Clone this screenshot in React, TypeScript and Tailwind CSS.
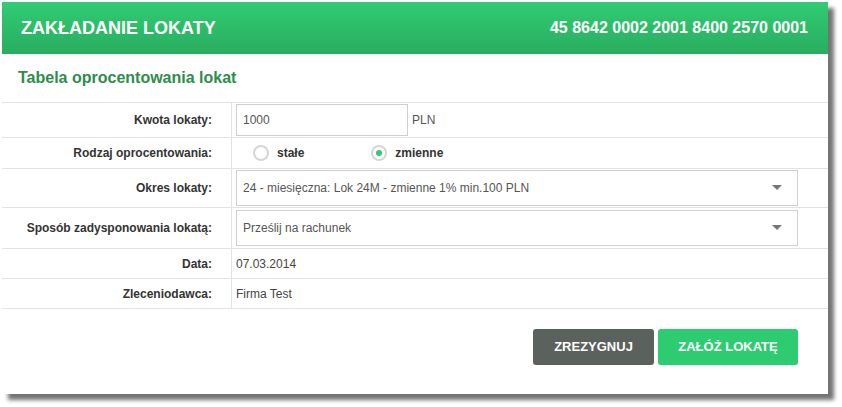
import React from "react";

const font = { fontFamily: '"Liberation Sans", Arial, sans-serif' };

function Row({ label, h, children }: { label: string; h: string; children: React.ReactNode }) {
  return (
    <div className={`flex border-b border-[#e2e2e2] ${h}`}>
      <div className="w-[229px] flex items-center justify-end pr-[19px] text-[12px] font-bold text-[#333]">{label}</div>
      <div className="flex-1 border-l border-[#e2e2e2] flex items-center pl-[4px] text-[12px] text-[#444]">{children}</div>
    </div>
  );
}

function Radio({ checked }: { checked?: boolean }) {
  return (
    <span className="w-[16px] h-[16px] rounded-full border-[2px] border-[#d6d6d6] bg-white flex items-center justify-center">
      {checked && <span className="w-[6px] h-[6px] rounded-full bg-[#2ecc71]" />}
    </span>
  );
}

function Select({ text }: { text: string }) {
  return (
    <div className="w-[562px] h-[36px] border border-[#cfcfcf] flex items-center justify-between pl-[6px] pr-[15px] text-[12px] text-[#555]">
      <span>{text}</span>
      <svg width="10" height="6" viewBox="0 0 10 6"><path d="M0 0h10L5 5z" fill="#777" /></svg>
    </div>
  );
}

export default function App() {
  return (
    <div className="w-[842px] h-[407px] bg-white pt-[2px] pl-[2px]" style={font}>
      <div className="w-[826px] h-[392px] bg-white shadow-[6px_6px_4px_rgba(0,0,0,0.55)] flex flex-col">
        <div className="h-[52px] bg-gradient-to-b from-[#30cc73] to-[#29ad5f] flex items-center justify-between pl-[19px] pr-[20px] text-white font-bold">
          <span className="text-[18px]">ZAKŁADANIE LOKATY</span>
          <span className="text-[16px]">45 8642 0002 2001 8400 2570 0001</span>
        </div>
        <div className="h-[48px] flex items-center pl-[16px] text-[16px] font-bold text-[#2d8d4b]">Tabela oprocentowania lokat</div>
        <div className="border-t border-[#e2e2e2]">
          <Row label="Kwota lokaty:" h="h-[35px]">
            <div className="w-[172px] h-[32px] border border-[#cfcfcf] flex items-center pl-[6px] text-[#555]">1000</div>
            <span className="ml-[4px] text-[#555]">PLN</span>
          </Row>
          <Row label="Rodzaj oprocentowania:" h="h-[31px]">
            <div className="flex items-center pl-[17px] font-bold text-[#333]">
              <Radio />
              <span className="ml-[8px]">stałe</span>
              <span className="ml-[67px]"><Radio checked /></span>
              <span className="ml-[8px]">zmienne</span>
            </div>
          </Row>
          <Row label="Okres lokaty:" h="h-[39px]">
            <Select text="24 - miesięczna: Lok 24M - zmienne 1% min.100 PLN" />
          </Row>
          <Row label="Sposób zadysponowania lokatą:" h="h-[41px]">
            <Select text="Prześlij na rachunek" />
          </Row>
          <Row label="Data:" h="h-[30px]">
            <span className="text-[#444]">07.03.2014</span>
          </Row>
          <Row label="Zleceniodawca:" h="h-[30px]">
            <span className="text-[#444]">Firma Test</span>
          </Row>
        </div>
        <div className="flex justify-end gap-[4px] pr-[30px] pt-[20px]">
          <button className="w-[121px] h-[36px] rounded-[3px] bg-[#5b615d] text-white text-[13px] font-bold">ZREZYGNUJ</button>
          <button className="w-[140px] h-[36px] rounded-[3px] bg-[#2ecc71] text-white text-[13px] font-bold">ZAŁÓŻ LOKATĘ</button>
        </div>
      </div>
    </div>
  );
}
